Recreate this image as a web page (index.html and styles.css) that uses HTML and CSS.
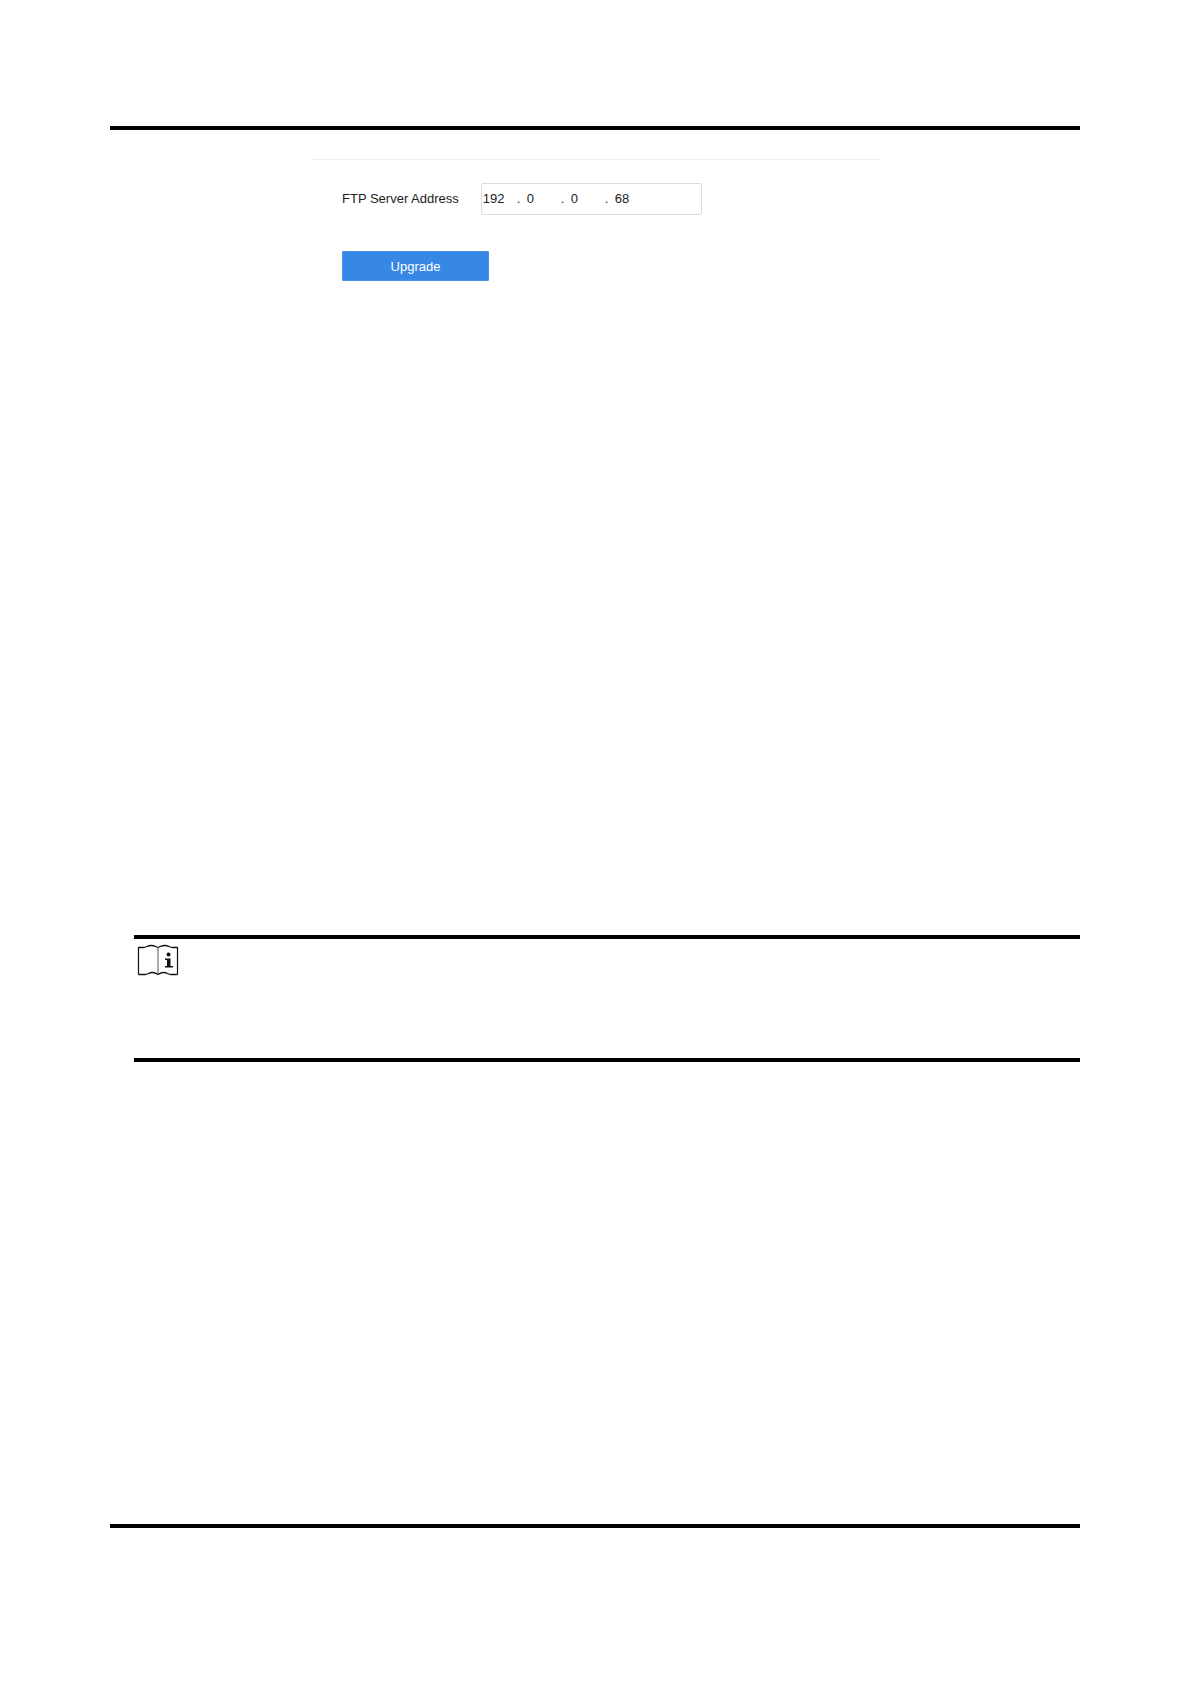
FILE: index.html
```html
<!DOCTYPE html>
<html lang="en">
<head>
    <meta charset="UTF-8">
    <meta name="viewport" content="width=device-width, initial-scale=1.0">
    <title>FTP Upgrade</title>
    <link rel="stylesheet" href="styles.css">
</head>
<body>
    <main class="page">
        <form class="upgrade-form">
            <div class="field">
                <label for="octet1">FTP Server Address</label>
                <div class="ip-input">
                    <input type="text" id="octet1" name="octet1" value="192" maxlength="3">
                    <span>.</span>
                    <input type="text" name="octet2" value="0" maxlength="3" aria-label="Second part of the address">
                    <span>.</span>
                    <input type="text" name="octet3" value="0" maxlength="3" aria-label="Third part of the address">
                    <span>.</span>
                    <input type="text" name="octet4" value="68" maxlength="3" aria-label="Fourth part of the address">
                </div>
            </div>
            <button type="button">Upgrade</button>
        </form>

        <section class="note" aria-label="Note">
            <!-- open book with an "i" on the right page -->
            <svg class="note-icon" width="42" height="32" viewBox="0 0 42 32" fill="none" stroke="#111">
                <path d="M1.5 3V30.5M40.5 3V30.5" stroke-width="1.2"/>
                <path d="M1.5 3.5H6C10 3.5 10 1.5 14 1.5C18 1.5 18 2.5 21 3.5C24 2.5 24 1.5 28 1.5C32 1.5 32 3.5 36 3.5H40.5" stroke-width="1.3"/>
                <path d="M1.5 30.5H8C11 30.5 12 28.5 15 28.5C18 28.5 19 29.5 21 30.5C23 29.5 24 28.5 27 28.5C30 28.5 31 30.5 34 30.5H40.5" stroke-width="1.3"/>
                <path d="M21 3.5V30.5" stroke="#555"/>
                <circle cx="31.5" cy="10.5" r="2" fill="#111" stroke="none"/>
                <path d="M28 14.5H33.5V22H36V23.5H28V22H30V16H28Z" fill="#111" stroke="none"/>
            </svg>
        </section>
    </main>
</body>
</html>
```
FILE: styles.css
```css
* {
    box-sizing: border-box;
    margin: 0;
    padding: 0;
}

body {
    font-family: "Liberation Sans", Arial, sans-serif;
    font-size: 13px;
    color: #222;
    background: #fff;
    min-height: 100vh;
    display: flex;
    padding: 126px 111px 156px 110px;
}

.page {
    flex: 1;
    border-top: 4px solid #000;
    border-bottom: 4px solid #000;
}

.upgrade-form {
    max-width: 568px;
    margin: 29px auto 0 202px;
    padding: 23px 30px 0;
    border-top: 1px solid #eee;
}

.field {
    display: flex;
    align-items: center;
    gap: 22px;
}

.field label {
    padding-bottom: 1px;
}

.ip-input {
    display: flex;
    align-items: center;
    width: 221px;
    height: 32px;
    padding: 0 0 1px 1px;
    border: 1px solid #ddd;
    border-radius: 2px;
}

.ip-input input {
    width: 34px;
    border: none;
    outline: none;
    background: transparent;
    font: inherit;
    color: inherit;
}

.ip-input span {
    width: 10px;
}

button {
    display: block;
    width: 147px;
    height: 30px;
    margin-top: 36px;
    border: 1px solid #4a90e6;
    border-radius: 1px;
    background: #3787e6;
    color: #fff;
    font: inherit;
    cursor: pointer;
}

.note {
    min-height: 127px;
    margin: 654px 0 0 24px;
    padding: 5px 3px;
    border-top: 4px solid #000;
    border-bottom: 4px solid #000;
}

.note-icon {
    display: block;
}
```
